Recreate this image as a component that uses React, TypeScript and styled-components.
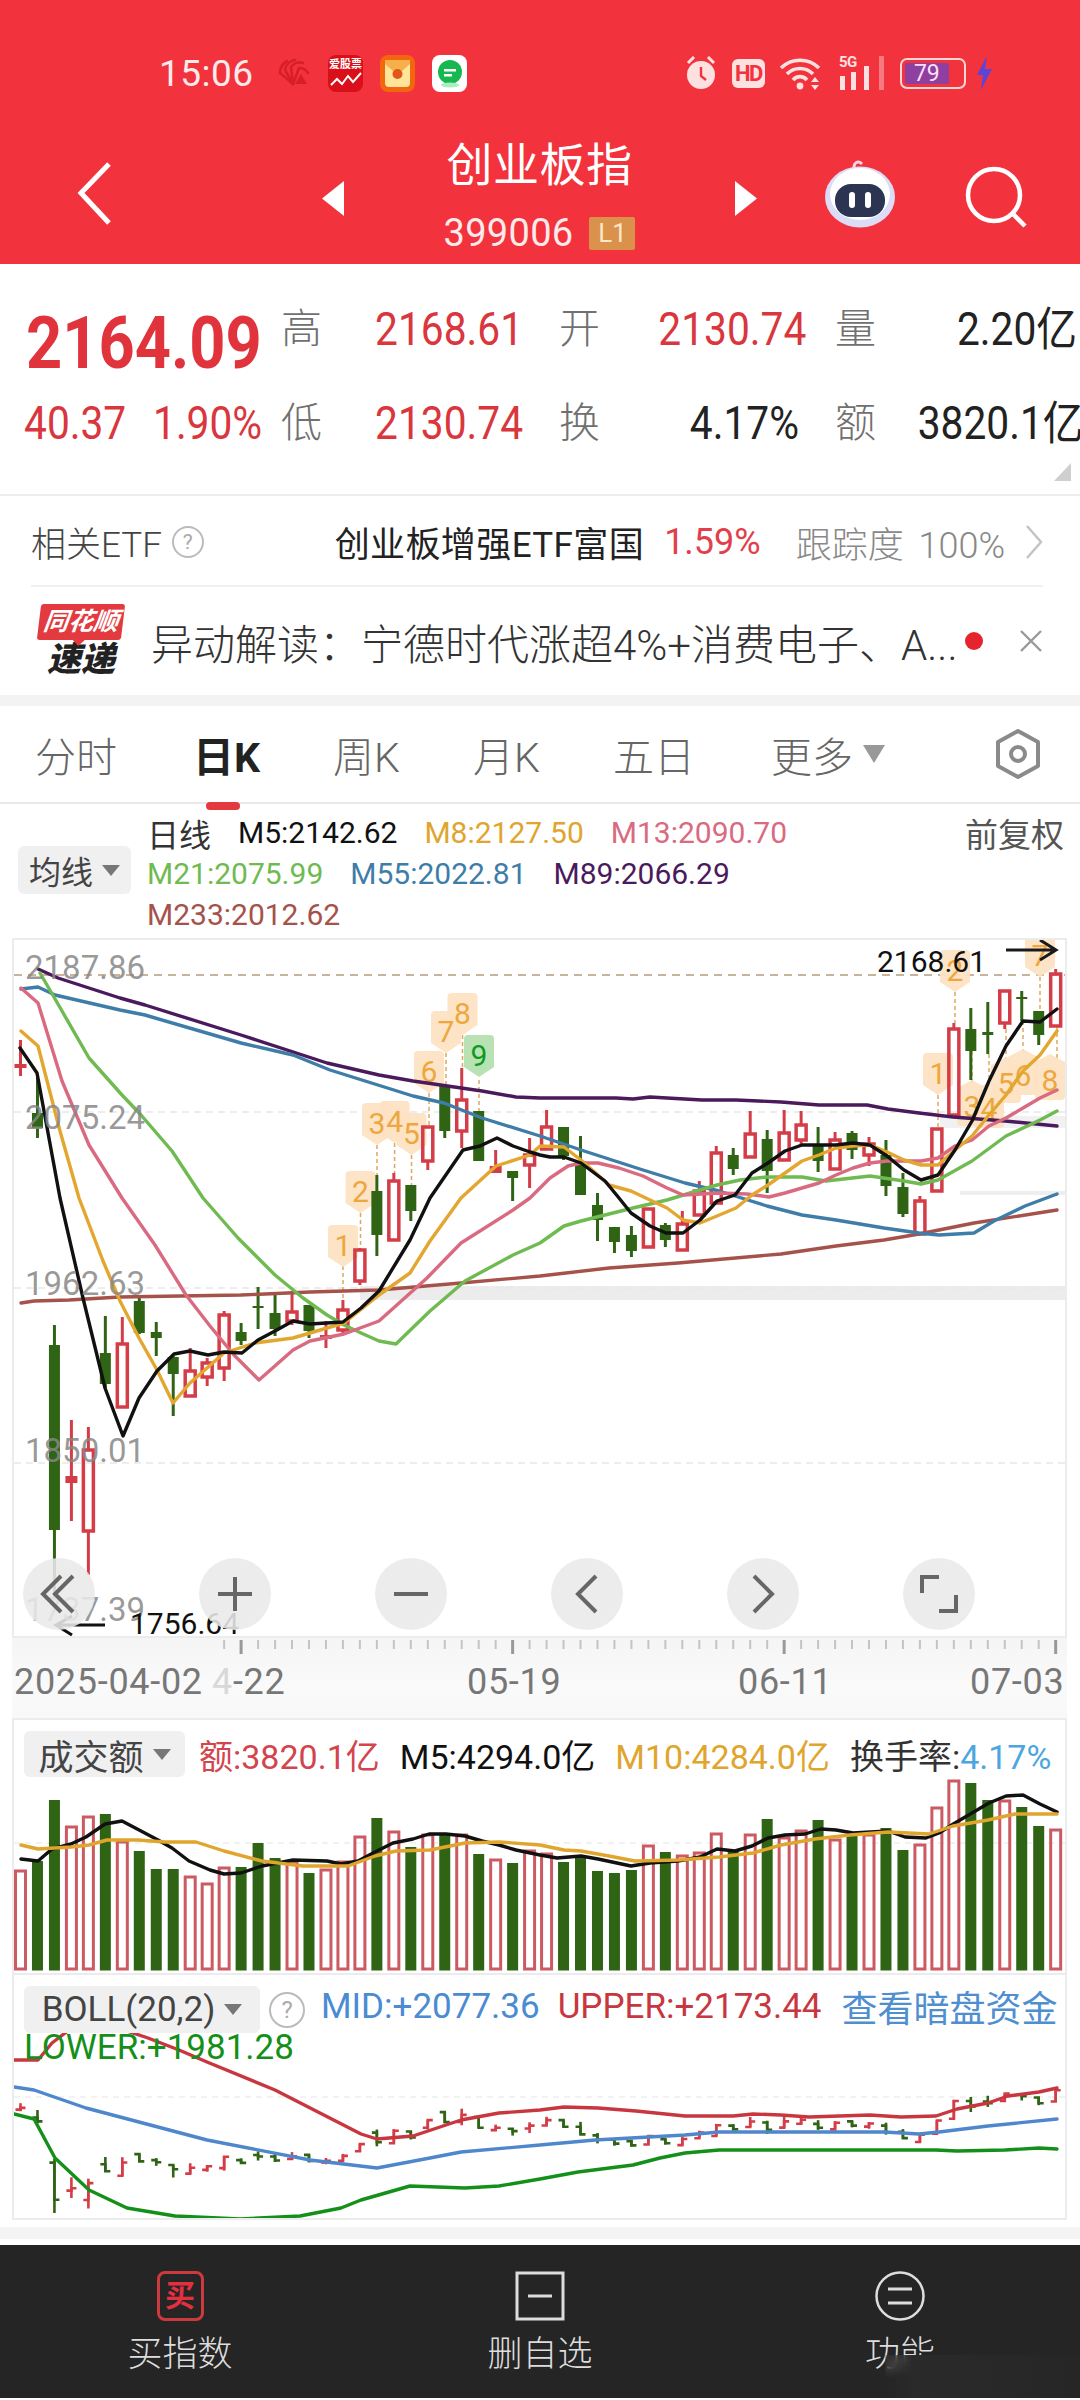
import React from "react";
import styled, { createGlobalStyle } from "styled-components";

const CJK = `Roboto, "Noto Sans CJK SC", sans-serif`;
const UP = "#d43d47";
const DOWN = "#2f6415";

const Global = createGlobalStyle`
  html, body { margin: 0; padding: 0; background: #fff; }
  body { font-family: ${CJK}; }
  * { box-sizing: border-box; }
`;

type C = [number, number, number, number, number];
const candles: C[] = [
  [1042,1078,1066,1070,2],[1077,1140,1115,1130,0],[1327,1600,1347,1532,0],[1422,1523,1478,1485,2],[1429,1577,1452,1533,1],
  [1318,1390,1355,1386,0],[1319,1410,1346,1409,1],[1300,1336,1303,1335,0],[1324,1358,1334,1340,0],[1358,1418,1359,1376,0],
  [1350,1398,1373,1398,1],[1360,1388,1365,1379,1],[1313,1383,1317,1370,1],[1325,1347,1334,1343,0],[1289,1331,1308,1310,0],
  [1297,1338,1315,1331,0],[1293,1327,1314,1323,1],[1307,1340,1307,1333,0],[1323,1350,1337,1341,2],[1302,1335,1312,1332,1],
  [1250,1287,1252,1283,1],[1177,1258,1193,1237,0],[1175,1243,1183,1242,1],[1187,1223,1187,1213,0],[1129,1172,1129,1163,1],
  [1087,1140,1088,1133,0],[1070,1150,1102,1133,1],[1113,1163,1113,1163,0],[1152,1175,1168,1175,2],[1173,1203,1173,1180,0],
  [1140,1190,1157,1167,1],[1112,1151,1129,1151,1],[1129,1162,1129,1158,0],[1138,1197,1163,1197,0],[1195,1243,1207,1222,0],
  [1229,1255,1229,1244,0],[1228,1259,1237,1253,0],[1211,1250,1211,1249,1],[1225,1249,1227,1242,0],[1213,1253,1226,1252,1],
  [1183,1217,1193,1217,1],[1148,1205,1155,1205,1],[1150,1177,1157,1171,0],[1113,1159,1136,1159,1],[1132,1195,1141,1173,0],
  [1112,1163,1135,1162,1],[1113,1147,1127,1142,1],[1129,1174,1148,1163,0],[1134,1172,1142,1171,1],[1133,1161,1135,1152,0],
  [1139,1168,1146,1157,1],[1142,1198,1157,1188,0],[1175,1219,1189,1216,0],[1198,1237,1203,1236,1],[1131,1193,1131,1193,1],
  [1025,1118,1031,1117,1],[1010,1082,1031,1053,0],[1004,1056,1034,1037,0],[992,1031,993,1025,1],[993,1023,999,1001,0],
  [1013,1047,1013,1037,0],[971,1028,976,1028,1],
];
const cx = (i: number) => 20.5 + 16.97 * i;

const ma5 = "20,1050 37,1075 60,1200 83,1300 105,1390 123,1438 139,1400 157,1373 174,1356 190,1353 208,1357 224,1354 242,1355 258,1342 275,1333 293,1323 310,1326 343,1324 361,1310 379,1293 410,1242 430,1200 463,1152 480,1148 497,1140 513,1148 530,1154 540,1157 550,1159 564,1159 581,1165 605,1183 619,1200 631,1215 650,1228 666,1235 683,1235 700,1222 717,1203 735,1197 752,1175 768,1165 785,1153 802,1147 819,1147 836,1147 853,1145 870,1147 887,1158 904,1172 921,1182 938,1177 955,1152 972,1123 989,1083 1006,1048 1023,1023 1040,1024 1057,1011";
const ma8 = "21,1033 38,1048 60,1133 79,1200 103,1263 120,1303 139,1340 157,1372 173,1405 190,1385 207,1370 224,1355 255,1345 293,1340 310,1335 344,1325 379,1297 410,1275 430,1243 461,1200 496,1168 530,1157 540,1148 564,1149 581,1162 609,1187 631,1193 650,1202 667,1210 683,1222 700,1225 717,1218 736,1210 752,1197 768,1187 785,1175 802,1163 819,1157 836,1150 853,1148 870,1147 887,1154 904,1162 921,1167 938,1167 955,1152 972,1138 989,1117 1006,1097 1023,1073 1040,1057 1057,1033";
const ma13 = "21,990 38,1005 62,1083 89,1147 122,1200 155,1247 186,1297 210,1328 234,1357 259,1382 293,1352 310,1343 344,1336 379,1323 427,1280 461,1245 513,1212 530,1200 540,1190 550,1180 568,1168 581,1165 598,1165 619,1170 643,1178 667,1190 683,1197 719,1195 747,1196 769,1199 785,1195 802,1190 819,1185 836,1177 853,1170 870,1165 887,1163 904,1163 921,1163 938,1160 955,1148 972,1142 989,1128 1006,1120 1023,1110 1040,1100 1057,1092";
const ma21 = "40,975 62,1013 89,1060 122,1097 141,1117 172,1153 203,1200 238,1240 275,1277 303,1300 327,1317 344,1327 361,1335 379,1343 396,1346 430,1313 465,1283 513,1257 540,1245 564,1228 581,1223 633,1210 667,1202 700,1192 717,1187 740,1182 767,1179 802,1179 826,1183 870,1178 904,1183 921,1186 938,1182 972,1163 1006,1138 1040,1122 1057,1113";
const ma55 = "21,991 38,989 55,997 120,1012 145,1017 241,1045 293,1057 330,1072 413,1098 444,1105 482,1120 540,1138 581,1152 643,1172 685,1185 719,1193 767,1208 802,1217 836,1222 884,1230 919,1235 939,1237 974,1235 994,1223 1025,1208 1057,1196";
const ma89 = "38,971 58,980 120,1000 145,1007 241,1037 327,1065 379,1077 413,1083 482,1093 516,1099 540,1100 616,1100 633,1101 650,1099 667,1100 702,1102 736,1102 781,1104 819,1107 867,1107 888,1111 919,1115 953,1119 1005,1123 1057,1128";
const ma233 = "21,1305 34,1303 69,1302 120,1299 241,1297 310,1294 379,1292 461,1285 540,1278 609,1270 678,1265 781,1256 836,1248 884,1242 919,1236 974,1225 1057,1212";

const volTop = [1873,1863,1802,1829,1819,1816,1844,1853,1871,1871,1879,1886,1870,1869,1845,1860,1864,1875,1872,1864,1839,1820,1834,1849,1837,1836,1837,1856,1862,1865,1853,1856,1864,1857,1873,1875,1872,1848,1854,1858,1855,1836,1852,1837,1821,1840,1833,1822,1842,1837,1837,1830,1852,1847,1810,1783,1785,1802,1803,1809,1828,1832];
const volUp = [1,0,0,1,1,0,1,0,0,0,1,1,1,0,0,0,1,0,1,1,1,0,1,0,1,0,1,0,1,0,1,1,0,0,0,0,0,1,0,1,1,1,0,1,0,1,1,0,1,0,1,0,0,1,1,1,0,0,1,0,0,1];
const vol5 = "21,1861 38,1863 52,1851 71,1846 86,1839 105,1826 122,1823 141,1833 158,1842 172,1850 189,1863 210,1872 224,1876 241,1875 262,1868 293,1862 327,1863 341,1866 358,1863 375,1854 393,1845 413,1841 429,1836 446,1836 465,1838 482,1843 499,1847 516,1852 540,1857 557,1860 581,1858 598,1861 631,1868 650,1865 678,1863 700,1859 717,1851 735,1853 752,1848 768,1840 785,1837 805,1836 821,1831 836,1832 853,1835 888,1833 905,1839 926,1840 939,1835 955,1825 972,1815 989,1805 1006,1798 1023,1797 1040,1806 1057,1814";
const vol10 = "21,1847 38,1851 71,1849 89,1847 107,1842 138,1842 165,1844 196,1844 224,1853 262,1863 303,1868 348,1868 375,1858 396,1853 430,1852 465,1845 499,1844 540,1847 564,1852 581,1853 609,1858 635,1863 678,1862 719,1859 753,1855 781,1847 815,1841 850,1837 888,1834 929,1836 953,1828 988,1822 1015,1816 1057,1816";
const bollU = "14,2062 38,2062 52,2045 69,2032 96,2029 124,2032 148,2040 179,2052 207,2064 275,2092 361,2136 377,2141 413,2138 461,2122 499,2115 540,2112 564,2109 598,2110 636,2113 685,2118 733,2118 753,2116 781,2117 809,2119 870,2117 901,2119 936,2118 957,2111 988,2105 1008,2098 1039,2094 1057,2090";
const bollM = "14,2089 34,2092 86,2110 207,2142 310,2162 377,2170 430,2160 461,2154 540,2147 595,2142 685,2137 719,2134 884,2134 919,2136 939,2134 988,2128 1057,2121";
const bollL = "14,2116 34,2121 55,2160 89,2192 127,2210 175,2218 240,2221 300,2218 341,2210 361,2202 410,2188 465,2190 499,2188 540,2181 578,2174 633,2167 660,2160 685,2155 719,2152 884,2152 936,2152 957,2153 1005,2152 1039,2150 1057,2151";

type B = [number, number, string, boolean];
const badges: B[] = [
  [343,1247,"1",false],[360.5,1193,"2",false],[377,1125,"3",false],[394.6,1123,"4",false],[411.5,1135,"5",false],
  [429,1073,"6",false],[446,1033,"7",false],[462.5,1015,"8",false],[938,1075,"1",false],[955,972,"2",false],[1040,957,"7",false],
  [972,1108,"3",true],[989,1110,"4",true],[1006,1085,"5",true],[1023,1077,"6",true],[1050,1082,"8",true],
];
const leaders: [number, number, number][] = [
  [343,1268,1302],[360.5,1215,1250],[377,1147,1177],[394.6,1145,1175],[411.5,1157,1187],[429,1095,1129],[446,1055,1087],[462.5,1037,1070],[479,1082,1113],
  [938,1097,1131],[955,994,1025],[1040,979,1013],[972,1053,1088],[989,1056,1090],[1006,1031,1065],[1023,1023,1057],[1057,1028,1062],
];

const Page = styled.div`width:1080px;height:2400px;background:#fff;display:flex;flex-direction:column;overflow:hidden;position:relative;`;
const Header = styled.header`height:264px;background:#f2333d;color:#fff;display:flex;flex-direction:column;flex:none;`;
const StatusBar = styled.div`height:132px;padding:50px 87px 36px 159px;display:flex;justify-content:space-between;align-items:center;`;
const StatusGroup = styled.div<{$gap:number}>`display:flex;align-items:center;gap:${p=>p.$gap}px;`;
const Clock = styled.span<{$mr?:number}>`font-size:37px;color:#fdeaea;width:92px;margin-right:${p=>p.$mr||0}px;letter-spacing:.5px;`;
const AppIcon = styled.div<{$bg:string}>`width:35px;height:37px;border-radius:8px;background:${p=>p.$bg};display:flex;align-items:center;justify-content:center;overflow:hidden;flex-direction:column;`;
const TinyText = styled.span`font-size:11px;line-height:12px;color:#fff;font-weight:700;white-space:nowrap;`;
const HdBadge = styled.span`width:33px;height:29px;border-radius:6px;background:#fde0e0;color:#f2333d;font-size:22px;font-weight:700;line-height:29px;text-align:center;letter-spacing:-1.5px;`;
const SignalBox = styled.div`position:relative;width:46px;height:34px;`;
const FiveG = styled.span`position:absolute;left:0;top:-3px;font-size:15px;font-weight:700;color:#fde0e0;letter-spacing:-.5px;`;
const Battery = styled.div`width:66px;height:31px;border:2.5px solid #fbd6d6;border-radius:7px;padding:3px;display:flex;position:relative;`;
const BatteryFill = styled.div`width:78%;background:#8e3f9f;border-radius:2px;color:#fde0f5;font-size:23px;line-height:21px;text-align:center;`;

const NavBar = styled.nav`height:132px;display:flex;align-items:center;padding-left:77px;`;
const NavCenter = styled.div`width:391px;align-self:flex-start;padding-top:4px;display:flex;flex-direction:column;align-items:center;`;
const Title = styled.div`font-size:46px;line-height:58px;letter-spacing:.5px;`;
const CodeRow = styled.div`margin-top:23px;height:33px;display:flex;align-items:center;gap:16px;`;
const Code = styled.span`font-size:38px;line-height:33px;color:#fdeaea;letter-spacing:.3px;`;
const LevelTag = styled.span`width:46px;height:33px;background:#d9914b;color:#fbe6c8;font-size:26px;line-height:33px;text-align:center;border-radius:2px;`;
const NavIcon = styled.svg<{$ml?:number;$mt?:number}>`flex:none;margin-left:${p=>p.$ml||0}px;margin-top:${p=>p.$mt||0}px;display:block;`;

const Quote = styled.section`flex:none;height:232px;padding:44px 0 0 26px;border-bottom:2px solid #ededed;position:relative;display:grid;grid-template-columns:255px 94px 184px 81px 195px 62px 180px;grid-template-rows:42px 42px;row-gap:52px;align-content:start;`;
const BigPrice = styled.div`font-size:73px;font-weight:700;line-height:42px;margin-top:14px;color:#e0333c;white-space:nowrap;transform:scaleX(.865);transform-origin:0 50%;`;
const ChangeRow = styled.div`display:grid;grid-template-columns:129px 1fr;margin-left:-2px;`;
const QLabel = styled.div`font-size:41px;line-height:42px;color:#707070;font-weight:300;`;
const QValue = styled.div<{$red?:boolean;$right?:boolean;$pr?:number}>`font-size:46px;line-height:42px;color:${p=>p.$red?"#d9363e":"#222"};white-space:nowrap;text-align:${p=>p.$right?"right":"left"};padding-right:${p=>p.$pr||0}px;transform:scaleX(.885);transform-origin:${p=>p.$right?`calc(100% - ${p.$pr||0}px)`:"0"} 50%;`;
const CornerMark = styled.div`position:absolute;right:9px;bottom:13px;width:0;height:0;border-left:17px solid transparent;border-bottom:18px solid #cfcfcf;`;

const EtfRow = styled.div`flex:none;height:91px;margin:0 37px 0 31px;padding-top:2px;display:flex;align-items:center;border-bottom:2px solid #f0f0f0;`;
const EtfLabel = styled.span`font-size:35px;color:#444;font-weight:300;white-space:nowrap;`;
const Help = styled.span<{$s?:number;$ml?:number}>`width:${p=>p.$s||32}px;height:${p=>p.$s||32}px;border:2px solid #bbb;border-radius:50%;color:#aaa;font-size:${p=>(p.$s||32)*0.66}px;line-height:${p=>(p.$s||32)-4}px;text-align:center;margin-left:${p=>p.$ml||10}px;flex:none;`;
const EtfRight = styled.div`margin-left:auto;display:flex;align-items:center;`;
const EtfName = styled.span`font-size:35px;color:#222;white-space:nowrap;letter-spacing:.4px;`;
const EtfPct = styled.span`font-size:36px;color:#e23f4c;margin-left:20px;`;
const EtfTrack = styled.span`font-size:36px;color:#888;font-weight:300;margin-left:35px;white-space:nowrap;word-spacing:6px;`;

const NewsRow = styled.div`flex:none;height:108px;padding-left:38px;display:flex;align-items:center;`;
const NewsLogo = styled.div`width:86px;display:flex;flex-direction:column;align-items:center;`;
const NewsFlag = styled.div`width:84px;height:36px;background:#e23a3f;border-radius:3px;transform:skewX(-7deg);color:#fff;font-size:25px;line-height:36px;font-weight:700;font-style:italic;text-align:center;white-space:nowrap;position:relative;
  &::after{content:"";position:absolute;left:36px;bottom:-6px;width:0;height:0;border-left:6px solid transparent;border-right:6px solid transparent;border-top:6px solid #e23a3f;}
`;
const NewsSub = styled.div`font-size:34px;line-height:38px;font-weight:900;font-style:italic;color:#222;`;
const NewsText = styled.span`font-size:42px;color:#333;font-weight:300;margin-left:27px;flex:none;width:806px;white-space:nowrap;`;
const NewsDot = styled.span`width:18px;height:18px;border-radius:50%;background:#e5252d;margin-left:8px;flex:none;`;
const SectionGap = styled.div<{$h:number;$c:string}>`flex:none;height:${p=>p.$h}px;background:${p=>p.$c};`;

const Tabs = styled.div`flex:none;height:98px;padding-left:35px;display:grid;grid-template-columns:158px 140px 140px 140px 158px 224px 48px;align-items:center;border-bottom:2px solid #e8e8e8;`;
const Tab = styled.div<{$active?:boolean}>`font-size:41px;color:${p=>p.$active?"#222":"#666"};font-weight:${p=>p.$active?700:300};position:relative;white-space:nowrap;display:flex;align-items:center;height:60px;
  ${p=>p.$active?`&::after{content:"";position:absolute;left:13px;bottom:-26px;width:34px;height:8px;border-radius:4px;background:#e23a3f;}`:""}
`;
const TabCaret = styled.span`width:0;height:0;margin-left:10px;border-left:11px solid transparent;border-right:11px solid transparent;border-top:18px solid #999;`;

const Legend = styled.div`flex:none;height:134px;padding:8px 10px 0 18px;display:flex;align-items:flex-start;position:relative;`;
const Selector = styled.div<{$w:number;$h?:number;$fs?:number;$mt?:number}>`flex:none;width:${p=>p.$w}px;height:${p=>p.$h||48}px;background:#f0f0f0;border-radius:6px;display:flex;align-items:center;justify-content:center;gap:9px;font-size:${p=>p.$fs||32}px;color:#444;white-space:nowrap;margin-top:${p=>p.$mt||0}px;`;
const VolSelector = styled(Selector)`margin-right:-6px;`;
const Caret = styled.span`width:0;height:0;border-left:9px solid transparent;border-right:9px solid transparent;border-top:11px solid #777;`;
const LegendRows = styled.div`margin-left:16px;flex:1;display:flex;flex-direction:column;`;
const LegendRow = styled.div`height:41px;display:flex;align-items:center;gap:27px;`;
const Ma = styled.span<{$c:string;$fs?:number}>`font-size:${p=>p.$fs||30}px;color:${p=>p.$c};white-space:nowrap;`;
const RightNote = styled.span`margin-left:auto;font-size:33px;color:#555;padding-right:6px;`;

const ChartFrame = styled.div<{$h:number;$bt?:boolean}>`flex:none;margin-left:12px;width:1055px;height:${p=>p.$h}px;border:solid #ececec;border-width:${p=>p.$bt===false?"0 2px 2px":"2px"};position:relative;`;
const ChartSvg = styled.svg`display:block;`;
const PriceLabel = styled.span<{$y:number}>`position:absolute;left:11px;top:${p=>p.$y}px;height:34px;line-height:34px;font-size:33px;color:rgba(135,135,135,.85);white-space:nowrap;`;
const PeakLabel = styled.span<{$x:number;$y:number}>`position:absolute;left:${p=>p.$x}px;top:${p=>p.$y}px;font-size:30px;line-height:34px;color:#111;white-space:nowrap;`;
const ZoomBar = styled.div`position:absolute;left:9px;bottom:6px;display:flex;gap:104px;`;
const ZoomBtn = styled.div`width:72px;height:72px;border-radius:50%;background:rgba(233,233,233,.88);display:flex;align-items:center;justify-content:center;`;

const Axis = styled.div`flex:none;margin-left:12px;width:1055px;height:80px;background:linear-gradient(180deg,#f5f5f5 0%,#fafafa 60%,#f8f8f8 100%);`;
const AxisLabels = styled.div`display:grid;grid-template-columns:198px 255px 271px 232px 1fr;padding-left:2px;height:30px;`;
const AxisLabel = styled.span`font-size:36px;line-height:32px;color:#777;letter-spacing:.7px;white-space:nowrap;`;
const Faded = styled.span`color:#d8d8d8;`;

const VolLegend = styled.div`height:58px;padding:10px 0 0 10px;display:flex;align-items:center;gap:20px;`;
const BollOverlay = styled.div`position:absolute;left:10px;top:11px;right:0;`;
const BollTop = styled.div`display:flex;align-items:center;`;
const BollVal = styled.span<{$c:string;$ml?:number;$fs?:number}>`font-size:${p=>p.$fs||35}px;color:${p=>p.$c};white-space:nowrap;margin-left:${p=>p.$ml||0}px;margin-top:-7px;`;
const BollLower = styled.div`font-size:35px;line-height:36px;color:#14901a;margin:-3px 0 0 0;`;

const TabBar = styled.div`flex:none;height:153px;background:#252525;display:grid;grid-template-columns:repeat(3,360px);position:relative;`;
const BarItem = styled.div`display:flex;flex-direction:column;align-items:center;padding-top:26px;`;
const BuyBox = styled.div`width:47px;height:50px;border:3px solid #cc3a40;border-radius:8px;color:#e23040;font-size:30px;line-height:44px;text-align:center;font-weight:700;`;
const BarLabel = styled.span`margin-top:16px;font-size:35px;line-height:36px;color:#ddd;font-weight:300;`;
const Watermark = styled.div`position:absolute;right:0;bottom:0;width:195px;height:43px;background:linear-gradient(90deg,rgba(42,42,42,0),#2a2a2a 14%,#262626);backdrop-filter:blur(5px);`;

const Line = ({ p, c, w = 3.4 }: { p: string; c: string; w?: number }) => (
  <polyline points={p} fill="none" stroke={c} strokeWidth={w} strokeLinejoin="round" strokeLinecap="round" />
);

const Badge = ({ b, green }: { b: B; green?: boolean }) => {
  const [x, y, , flip] = b;
  const top = y - 20;
  const d = flip
    ? `M${x},${top - 6} L${x + 15},${top + 2} V${top + 36} Q${x + 15},${top + 40} ${x + 11},${top + 40} H${x - 11} Q${x - 15},${top + 40} ${x - 15},${top + 36} V${top + 2} Z`
    : `M${x - 11},${top} H${x + 11} Q${x + 15},${top} ${x + 15},${top + 4} V${top + 32} L${x},${top + 42} L${x - 15},${top + 32} V${top + 4} Q${x - 15},${top} ${x - 11},${top} Z`;
  return <path d={d} fill={green ? "#b2dfae" : "#fde2c2"} opacity={0.92} />;
};

const Candle = ({ c, i }: { c: C; i: number }) => {
  const x = cx(i);
  const [wt, wb, bt, bb, kind] = c;
  const col = kind === 0 ? DOWN : UP;
  return (
    <g>
      <line x1={x} x2={x} y1={wt} y2={kind === 1 ? bt : wb} stroke={col} strokeWidth={3} />
      {kind === 1 && <line x1={x} x2={x} y1={bb} y2={wb} stroke={col} strokeWidth={3} />}
      {kind === 1 ? (
        <rect x={x - 5} y={bt} width={10} height={bb - bt} fill="none" stroke={col} strokeWidth={3.5} />
      ) : (
        <rect x={x - (kind === 2 ? 6 : 5.5)} y={bt} width={kind === 2 ? 12 : 11} height={Math.max(bb - bt, 2)} fill={col} />
      )}
    </g>
  );
};

const Mini = ({ c, i }: { c: C; i: number }) => {
  const m = (v: number) => 1902 + 0.195 * v;
  const x = cx(i);
  const [wt, wb, bt, bb, kind] = c;
  const col = kind === 0 ? DOWN : UP;
  return (
    <g stroke={col} strokeWidth={2.6} fill="none">
      <line x1={x} x2={x} y1={m(wt)} y2={m(wb) + 1} />
      <path d={kind === 0 ? `M${x - 5},${m(bt)} H${x} V${m(bb) + 1} H${x + 5}` : `M${x + 5},${m(bt)} H${x} V${m(bb) + 1} H${x - 5}`} />
    </g>
  );
};

const App = () => (
  <Page>
    <Global />
    <Header>
      <StatusBar>
        <StatusGroup $gap={17}>
          <Clock $mr={7}>15:06</Clock>
          <svg width="36" height="30" viewBox="0 0 36 30">
            <g fill="none" stroke="#d81f26" strokeWidth="2.6" strokeLinecap="round">
              <path d="M18 26 L5 15 A14 14 0 0 1 12 3" />
              <path d="M18 26 L10 12 A12 12 0 0 1 20 2" />
              <path d="M18 26 L16 9 A10 10 0 0 1 28 5" />
              <path d="M18 26 L24 10 A10 10 0 0 1 33 15" />
            </g>
            <path d="M26 16 L32 26 H20 Z" fill="#d81f26" />
          </svg>
          <AppIcon $bg="#d9101a">
            <TinyText>爱股票</TinyText>
            <svg width="32" height="17" viewBox="0 0 32 17"><path d="M1 14 L7 8 L12 13 L18 5 L23 11 L31 2" fill="none" stroke="#fff" strokeWidth="2" /></svg>
          </AppIcon>
          <AppIcon $bg="#f2660d">
            <svg width="25" height="27" viewBox="0 0 25 27"><rect width="25" height="27" rx="4" fill="#ffe59a" /><path d="M0 4 L12.5 15 L25 4 V0 H0 Z" fill="#f5b04c" /><circle cx="12.5" cy="14" r="5" fill="#e2561c" /></svg>
          </AppIcon>
          <AppIcon $bg="#fff">
            <svg width="28" height="30" viewBox="0 0 28 30"><circle cx="14" cy="14" r="12" fill="#17b84f" /><rect x="8" y="11" width="12" height="2.5" fill="#fff" /><rect x="8" y="16" width="8" height="2.5" fill="#fff" /><ellipse cx="14" cy="27" rx="9" ry="2.5" fill="#a8eec0" /></svg>
          </AppIcon>
        </StatusGroup>
        <StatusGroup $gap={15}>
          <svg width="32" height="34" viewBox="0 0 32 34">
            <circle cx="16" cy="19" r="14" fill="#fde0e0" />
            <path d="M16 11 V20 L21 24" stroke="#f2333d" strokeWidth="2.4" fill="none" />
            <path d="M3 7 L9 1 M29 7 L23 1" stroke="#fde0e0" strokeWidth="3" />
          </svg>
          <HdBadge>HD</HdBadge>
          <svg width="44" height="33" viewBox="0 0 44 33">
            <g fill="none" stroke="#fde0e0" strokeWidth="3.6">
              <path d="M1 11 A27 27 0 0 1 39 11" />
              <path d="M7 17 A18 18 0 0 1 33 17" />
              <path d="M13 23 A9 9 0 0 1 27 23" />
            </g>
            <circle cx="20" cy="29" r="3.4" fill="#fde0e0" />
            <path d="M35 20 L39 25 H31 Z M35 33 L39 28 H31 Z" fill="#fde0e0" />
          </svg>
          <SignalBox>
            <FiveG>5G</FiveG>
            <svg width="46" height="34" viewBox="0 0 46 34">
              <rect x="1" y="20" width="5" height="14" fill="#fde0e0" />
              <rect x="12" y="16" width="5" height="18" fill="#fde0e0" />
              <rect x="25" y="10" width="5" height="24" fill="#fde0e0" />
              <rect x="40" y="0" width="5" height="34" fill="#f77a80" />
            </svg>
          </SignalBox>
          <Battery><BatteryFill>79</BatteryFill></Battery>
          <svg width="17" height="34" viewBox="0 0 17 34" style={{ marginLeft: -5 }}><path d="M11 0 L1 19 H7 L5 34 L16 13 H9 Z" fill="#5a45d8" /></svg>
        </StatusGroup>
      </StatusBar>
      <NavBar>
        <NavIcon $mt={-10} width="35" height="63" viewBox="0 0 35 63"><path d="M32 2 L4 31 L32 61" fill="none" stroke="#fff" strokeWidth="5" /></NavIcon>
        <NavIcon $ml={210} width="22" height="35" viewBox="0 0 22 35"><path d="M22 0 V35 L0 17.5 Z" fill="#fff" /></NavIcon>
        <NavCenter>
          <Title>创业板指</Title>
          <CodeRow><Code>399006</Code><LevelTag>L1</LevelTag></CodeRow>
        </NavCenter>
        <NavIcon width="22" height="35" viewBox="0 0 22 35"><path d="M0 0 V35 L22 17.5 Z" fill="#fff" /></NavIcon>
        <NavIcon $ml={68} $mt={-8} width="70" height="68" viewBox="0 0 70 68">
          <path d="M30 10 C27 3 33 0 37 4" fill="none" stroke="#f7d5e0" strokeWidth="3" />
          <ellipse cx="35" cy="37" rx="35" ry="30.5" fill="#dcdcf7" />
          <ellipse cx="35" cy="34" rx="30" ry="26" fill="#fff" />
          <rect x="10" y="24" width="50" height="33" rx="16" fill="#2b3552" />
          <rect x="24" y="32" width="6" height="16" rx="3" fill="#fff" />
          <rect x="40" y="32" width="6" height="16" rx="3" fill="#fff" />
        </NavIcon>
        <NavIcon $ml={70} $mt={-3} width="62" height="62" viewBox="0 0 62 62">
          <circle cx="29" cy="29" r="26" fill="none" stroke="#fff" strokeWidth="4.5" />
          <path d="M47 47 L60 60" stroke="#fff" strokeWidth="4.5" />
        </NavIcon>
      </NavBar>
    </Header>

    <Quote>
      <BigPrice>2164.09</BigPrice>
      <QLabel>高</QLabel>
      <QValue $red>2168.61</QValue>
      <QLabel>开</QLabel>
      <QValue $red $right $pr={36}>2130.74</QValue>
      <QLabel>量</QLabel>
      <QValue $right>2.20亿</QValue>
      <ChangeRow><QValue $red>40.37</QValue><QValue $red>1.90%</QValue></ChangeRow>
      <QLabel>低</QLabel>
      <QValue $red>2130.74</QValue>
      <QLabel>换</QLabel>
      <QValue $right $pr={36}>4.17%</QValue>
      <QLabel>额</QLabel>
      <QValue $right>3820.1亿</QValue>
      <CornerMark />
    </Quote>

    <EtfRow>
      <EtfLabel>相关ETF</EtfLabel>
      <Help>?</Help>
      <EtfRight>
        <EtfName>创业板增强ETF富国</EtfName>
        <EtfPct>1.59%</EtfPct>
        <EtfTrack>跟踪度 100%</EtfTrack>
        <svg width="18" height="36" viewBox="0 0 18 36" style={{ marginLeft: 20 }}><path d="M2 2 L16 18 L2 34" fill="none" stroke="#c4c4c4" strokeWidth="2.5" /></svg>
      </EtfRight>
    </EtfRow>

    <NewsRow>
      <NewsLogo>
        <NewsFlag>同花顺</NewsFlag>
        <NewsSub>速递</NewsSub>
      </NewsLogo>
      <NewsText>异动解读：宁德时代涨超4%+消费电子、A...</NewsText>
      <NewsDot />
      <svg width="24" height="24" viewBox="0 0 24 24" style={{ marginLeft: 36 }}><path d="M2 2 L22 22 M22 2 L2 22" stroke="#999" strokeWidth="2.4" /></svg>
    </NewsRow>
    <SectionGap $h={11} $c="#f3f3f3" />

    <Tabs>
      <Tab>分时</Tab>
      <Tab $active>日K</Tab>
      <Tab>周K</Tab>
      <Tab>月K</Tab>
      <Tab>五日</Tab>
      <Tab>更多<TabCaret /></Tab>
      <svg width="46" height="52" viewBox="0 0 46 52">
        <path d="M23 3 L43 14 V38 L23 49 L3 38 V14 Z" fill="none" stroke="#8a8a8a" strokeWidth="4" strokeLinejoin="round" />
        <circle cx="23" cy="26" r="7" fill="none" stroke="#8a8a8a" strokeWidth="4" />
      </svg>
    </Tabs>

    <Legend>
      <Selector $w={113} $mt={34}>均线<Caret /></Selector>
      <LegendRows>
        <LegendRow>
          <Ma $c="#333" $fs={32}>日线</Ma>
          <Ma $c="#111">M5:2142.62</Ma>
          <Ma $c="#e0a52d">M8:2127.50</Ma>
          <Ma $c="#d96a80">M13:2090.70</Ma>
          <RightNote>前复权</RightNote>
        </LegendRow>
        <LegendRow>
          <Ma $c="#6fba51">M21:2075.99</Ma>
          <Ma $c="#3e7da8">M55:2022.81</Ma>
          <Ma $c="#4a1a5c">M89:2066.29</Ma>
        </LegendRow>
        <LegendRow><Ma $c="#a5524a">M233:2012.62</Ma></LegendRow>
      </LegendRows>
    </Legend>

    <ChartFrame $h={700}>
      <ChartSvg width="1051" height="696" viewBox="14 942 1051 696">
        <line x1="14" x2="1065" y1="977" y2="977" stroke="#c9b39a" strokeWidth="2" strokeDasharray="8 6" />
        <rect x="940" y="1118" width="125" height="12" fill="#f1f1f1" />
        <rect x="960" y="1193" width="105" height="4" fill="#eeeeee" />
        <rect x="360" y="1288" width="705" height="14" fill="#ececec" />
        {[1114, 1290, 1465].map((y) => (
          <line key={y} x1="14" x2="1065" y1={y} y2={y} stroke="#e8e8e8" strokeWidth="1.5" strokeDasharray="7 5" />
        ))}
        {leaders.map(([x, a, b], i) => (
          <line key={i} x1={x} x2={x} y1={a} y2={b} stroke="#dba860" strokeWidth="1.5" strokeDasharray="4 3" />
        ))}
        {badges.map((b, i) => <Badge key={i} b={b} />)}
        <Badge b={[479, 1057, "9", false]} green />
        {badges.map((b, i) => (
          <text key={i} x={b[0]} y={b[1] + 11} textAnchor="middle" fontFamily="Roboto" fontSize="30" fill="#eda73e">{b[2]}</text>
        ))}
        <text x="479" y="1068" textAnchor="middle" fontFamily="Roboto" fontSize="30" fill="#0c9c1c">9</text>
        {candles.map((c, i) => <Candle key={i} c={c} i={i} />)}
        <Line p={ma233} c="#a5524a" />
        <Line p={ma89} c="#4a1a5c" />
        <Line p={ma55} c="#3e7da8" />
        <Line p={ma21} c="#6fba51" />
        <Line p={ma13} c="#d96a80" />
        <Line p={ma8} c="#e3a62f" />
        <Line p={ma5} c="#111" />
        <path d="M1006 952 H1056 M1040 942 L1056 952 L1040 962" fill="none" stroke="#1a1a1a" strokeWidth="3" />
        <path d="M105 1627 H56 M72 1618 L56 1627 L72 1637" fill="none" stroke="#111" strokeWidth="3" />
      </ChartSvg>
      <PriceLabel $y={11}>2187.86</PriceLabel>
      <PriceLabel $y={161}>2075.24</PriceLabel>
      <PriceLabel $y={327}>1962.63</PriceLabel>
      <PriceLabel $y={494}>1850.01</PriceLabel>
      <PriceLabel $y={653}>1737.39</PriceLabel>
      <PeakLabel $x={863} $y={5}>2168.61</PeakLabel>
      <PeakLabel $x={116} $y={667}>1756.64</PeakLabel>
      <ZoomBar>
        <ZoomBtn><svg width="44" height="44" viewBox="0 0 44 44"><path d="M24 4 L6 22 L24 40 M36 4 L18 22 L36 40" fill="none" stroke="#666" strokeWidth="4" /></svg></ZoomBtn>
        <ZoomBtn><svg width="36" height="36" viewBox="0 0 36 36"><path d="M18 1 V35 M1 18 H35" stroke="#666" strokeWidth="4" /></svg></ZoomBtn>
        <ZoomBtn><svg width="36" height="8" viewBox="0 0 36 8"><path d="M1 4 H35" stroke="#666" strokeWidth="4" /></svg></ZoomBtn>
        <ZoomBtn><svg width="24" height="40" viewBox="0 0 24 40"><path d="M21 2 L3 20 L21 38" fill="none" stroke="#666" strokeWidth="4" /></svg></ZoomBtn>
        <ZoomBtn><svg width="24" height="40" viewBox="0 0 24 40"><path d="M3 2 L21 20 L3 38" fill="none" stroke="#666" strokeWidth="4" /></svg></ZoomBtn>
        <ZoomBtn><svg width="38" height="38" viewBox="0 0 38 38"><path d="M19 2 H2 V18 M19 36 H36 V20" fill="none" stroke="#666" strokeWidth="4" /></svg></ZoomBtn>
      </ZoomBar>
    </ChartFrame>

    <Axis>
      <svg width="1055" height="28" viewBox="12 1640 1055 28" style={{ display: "block" }}>
        {candles.map((_, i) => {
          if (i < 12) return null;
          const major = (i - 13) % 16 === 0;
          const x = cx(i);
          return <line key={i} x1={x} x2={x} y1={1642} y2={major ? 1656 : 1651} stroke={major ? "#999" : "#c4c4c4"} strokeWidth={major ? 3 : 2} />;
        })}
      </svg>
      <AxisLabels>
        <AxisLabel>2025-04-02</AxisLabel>
        <AxisLabel><Faded>4</Faded>-22</AxisLabel>
        <AxisLabel>05-19</AxisLabel>
        <AxisLabel>06-11</AxisLabel>
        <AxisLabel>07-03</AxisLabel>
      </AxisLabels>
    </Axis>

    <ChartFrame $h={257}>
      <VolLegend>
        <VolSelector $w={161} $h={46} $fs={35}>成交额<Caret /></VolSelector>
        <Ma $c="#d2454e" $fs={34}>额:3820.1亿</Ma>
        <Ma $c="#111" $fs={34}>M5:4294.0亿</Ma>
        <Ma $c="#e0a52d" $fs={34}>M10:4284.0亿</Ma>
        <Ma $c="#333" $fs={34}>换手率:<Ma $c="#4da6de" $fs={34}>4.17%</Ma></Ma>
      </VolLegend>
      <ChartSvg width="1051" height="195" viewBox="14 1780 1051 195">
        <line x1="14" x2="1065" y1="1845" y2="1845" stroke="#eeeeee" strokeWidth="1.5" strokeDasharray="6 5" />
        {volTop.map((t, i) =>
          volUp[i] ? (
            <rect key={i} x={cx(i) - 5} y={t} width={10} height={1971 - t} fill="none" stroke="#cc5a62" strokeWidth={3} />
          ) : (
            <rect key={i} x={cx(i) - 5.5} y={t} width={11} height={1972.5 - t} fill={DOWN} />
          )
        )}
        <Line p={vol5} c="#111" />
        <Line p={vol10} c="#e0a52d" />
      </ChartSvg>
    </ChartFrame>

    <ChartFrame $h={245} $bt={false}>
      <ChartSvg width="1051" height="243" viewBox="14 1977 1051 243">
        <line x1="14" x2="1065" y1="2099" y2="2099" stroke="#eeeeee" strokeWidth="1.5" strokeDasharray="6 5" />
        {candles.map((c, i) => <Mini key={i} c={c} i={i} />)}
        <Line p={bollU} c="#c8373f" />
        <Line p={bollM} c="#4f87cc" />
        <Line p={bollL} c="#14901a" />
      </ChartSvg>
      <BollOverlay>
        <BollTop>
          <Selector $w={236} $h={47} $fs={35}>BOLL(20,2)<Caret /></Selector>
          <Help $s={36} $ml={9}>?</Help>
          <BollVal $c="#4a8bd1" $ml={16}>MID:+2077.36</BollVal>
          <BollVal $c="#c8373f" $ml={18}>UPPER:+2173.44</BollVal>
          <BollVal $c="#4f8fd0" $ml={20} $fs={36}>查看暗盘资金</BollVal>
        </BollTop>
        <BollLower>LOWER:+1981.28</BollLower>
      </BollOverlay>
    </ChartFrame>

    <SectionGap $h={7} $c="#fff" />
    <SectionGap $h={12} $c="#f4f4f4" />
    <SectionGap $h={6} $c="#fff" />

    <TabBar>
      <BarItem>
        <BuyBox>买</BuyBox>
        <BarLabel>买指数</BarLabel>
      </BarItem>
      <BarItem>
        <svg width="50" height="50" viewBox="0 0 50 50"><rect x="2" y="2" width="46" height="46" fill="none" stroke="#ddd" strokeWidth="3" /><path d="M13 25 H37" stroke="#ddd" strokeWidth="3" /></svg>
        <BarLabel>删自选</BarLabel>
      </BarItem>
      <BarItem>
        <svg width="50" height="50" viewBox="0 0 50 50"><circle cx="25" cy="25" r="23.5" fill="none" stroke="#ddd" strokeWidth="2.5" /><path d="M13 18 H37 M13 32 H37" stroke="#ddd" strokeWidth="3" /></svg>
        <BarLabel>功能</BarLabel>
      </BarItem>
      <Watermark />
    </TabBar>
  </Page>
);

export default App;
